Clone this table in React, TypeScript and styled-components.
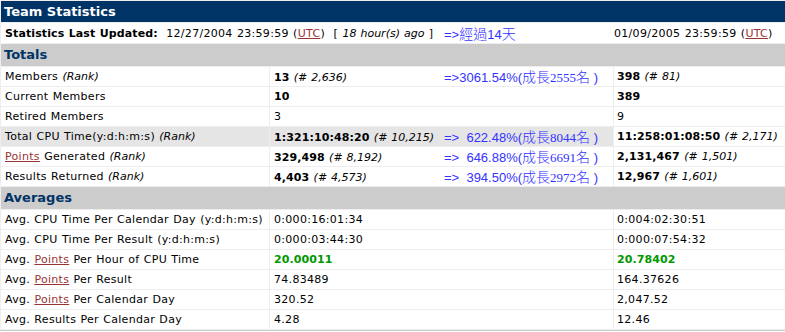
import React from "react"
import styled, { createGlobalStyle } from "styled-components"

const GlobalStyle = createGlobalStyle`
  body {
    margin: 0;
    background: #ffffff;
    font-family: "DejaVu Sans", Verdana, sans-serif;
    font-size: 11px;
    letter-spacing: 0.3px;
    word-spacing: 0.5px;
    color: #000000;
  }
  b {
    letter-spacing: 0.1px;
  }
`

const Table = styled.div`
  display: flex;
  flex-direction: column;
  gap: 1px;
  width: 785px;
  box-sizing: border-box;
  padding: 1px 0 1px 1px;
  background: #eeeeee;
  border-bottom: 1px solid #cccccc;
`

const TitleBar = styled.div`
  height: 21px;
  line-height: 22px;
  padding-left: 3px;
  background: #003366;
  color: #ffffff;
  font-size: 13px;
  font-weight: bold;
  letter-spacing: 0;
  word-spacing: 0;
`

const StampRow = styled.div`
  display: grid;
  grid-template-columns: 443px 170px 1fr;
  align-items: center;
  height: 20px;
  background: #ffffff;
  white-space: nowrap;
`

const StampCell = styled.div`
  padding-left: 4px;
`

const SectionHeader = styled.div`
  height: 22px;
  line-height: 22px;
  padding-left: 3px;
  background: #cccccc;
  color: #003366;
  font-size: 13px;
  font-weight: bold;
  letter-spacing: 0;
`

const DataRow = styled.div`
  display: grid;
  grid-template-columns: 268px 343px 1fr;
  column-gap: 1px;
  height: 19px;
  white-space: nowrap;
`

const Cell = styled.div<{ $shaded?: boolean }>`
  line-height: 19px;
  overflow: hidden;
  background: ${(p) => (p.$shaded ? "#e5e5e5" : "#ffffff")};
`

const LabelCell = styled(Cell)`
  padding-left: 4px;
`

const ValueCell = styled(Cell)`
  display: grid;
  grid-template-columns: 170px 1fr;
  align-items: center;
  padding-left: 4px;
`

const OtherCell = styled(Cell)`
  padding-left: 3px;
`

const Rank = styled.i`
  font-weight: normal;
  letter-spacing: 0;
`

const Link = styled.a`
  color: #993333;
  text-decoration: underline;
`

const Green = styled.b`
  color: #009900;
`

const Gain = styled.div`
  font-family: "Liberation Sans", "Noto Sans CJK TC", sans-serif;
  font-size: 13px;
  letter-spacing: 0;
  word-spacing: 0;
  color: #3333ff;
  white-space: pre;
`

const Cjk = styled.span`
  font-family: "Noto Sans CJK TC", sans-serif;
  font-size: 14px;
  font-weight: 300;
`

const Num = styled.span`
  font-family: "Liberation Serif", serif;
  font-size: 13px;
`

type Note = { pct: string; growth: string }

type TotalRow = {
  label: React.ReactNode
  value: React.ReactNode
  note?: Note
  other: React.ReactNode
  shaded?: boolean
}

type AvgRow = {
  label: React.ReactNode
  value: React.ReactNode
  other: React.ReactNode
}

const PointsLink = () => <Link href="#">Points</Link>

const totals: TotalRow[] = [
  {
    label: <>Members <Rank>(Rank)</Rank></>,
    value: <><b>13</b> <Rank>(# 2,636)</Rank></>,
    note: { pct: "3061.54%", growth: "2555" },
    other: <><b>398</b> <Rank>(# 81)</Rank></>,
  },
  {
    label: "Current Members",
    value: <b>10</b>,
    other: <b>389</b>,
  },
  {
    label: "Retired Members",
    value: "3",
    other: "9",
  },
  {
    label: <>Total CPU Time(y:d:h:m:s) <Rank>(Rank)</Rank></>,
    value: <><b>1:321:10:48:20</b> <Rank>(# 10,215)</Rank></>,
    note: { pct: "  622.48%", growth: "8044" },
    other: <><b>11:258:01:08:50</b> <Rank>(# 2,171)</Rank></>,
    shaded: true,
  },
  {
    label: <><PointsLink /> Generated <Rank>(Rank)</Rank></>,
    value: <><b>329,498</b> <Rank>(# 8,192)</Rank></>,
    note: { pct: "  646.88%", growth: "6691" },
    other: <><b>2,131,467</b> <Rank>(# 1,501)</Rank></>,
  },
  {
    label: <>Results Returned <Rank>(Rank)</Rank></>,
    value: <><b>4,403</b> <Rank>(# 4,573)</Rank></>,
    note: { pct: "  394.50%", growth: "2972" },
    other: <><b>12,967</b> <Rank>(# 1,601)</Rank></>,
  },
]

const averages: AvgRow[] = [
  { label: "Avg. CPU Time Per Calendar Day (y:d:h:m:s)", value: "0:000:16:01:34", other: "0:004:02:30:51" },
  { label: "Avg. CPU Time Per Result (y:d:h:m:s)", value: "0:000:03:44:30", other: "0:000:07:54:32" },
  {
    label: <>Avg. <PointsLink /> Per Hour of CPU Time</>,
    value: <Green>20.00011</Green>,
    other: <Green>20.78402</Green>,
  },
  { label: <>Avg. <PointsLink /> Per Result</>, value: "74.83489", other: "164.37626" },
  { label: <>Avg. <PointsLink /> Per Calendar Day</>, value: "320.52", other: "2,047.52" },
  { label: "Avg. Results Per Calendar Day", value: "4.28", other: "12.46" },
]

const NoteText = ({ note }: { note?: Note }) =>
  note ? (
    <Gain>
      =&gt;{note.pct}(<Cjk>成長</Cjk>
      <Num>{note.growth}</Num>
      <Cjk>名</Cjk> )
    </Gain>
  ) : null

const App = () => {
  return (
    <>
      <GlobalStyle />
      <Table>
        <TitleBar>Team Statistics</TitleBar>
        <StampRow>
          <StampCell>
            <b>Statistics Last Updated:</b>&nbsp; 12/27/2004 23:59:59 (<Link href="#">UTC</Link>)&nbsp; [{" "}
            <Rank>18 hour(s) ago</Rank> ]
          </StampCell>
          <Gain>
            =&gt;<Cjk>經過</Cjk>14<Cjk>天</Cjk>
          </Gain>
          <div>
            01/09/2005 23:59:59 (<Link href="#">UTC</Link>)
          </div>
        </StampRow>

        <SectionHeader>Totals</SectionHeader>
        {totals.map((row, i) => (
          <DataRow key={i}>
            <LabelCell $shaded={row.shaded}>{row.label}</LabelCell>
            <ValueCell $shaded={row.shaded}>
              <span>{row.value}</span>
              <NoteText note={row.note} />
            </ValueCell>
            <OtherCell>{row.other}</OtherCell>
          </DataRow>
        ))}

        <SectionHeader>Averages</SectionHeader>
        {averages.map((row, i) => (
          <DataRow key={i}>
            <LabelCell>{row.label}</LabelCell>
            <ValueCell>
              <span>{row.value}</span>
            </ValueCell>
            <OtherCell>{row.other}</OtherCell>
          </DataRow>
        ))}
      </Table>
    </>
  )
}

export default App
